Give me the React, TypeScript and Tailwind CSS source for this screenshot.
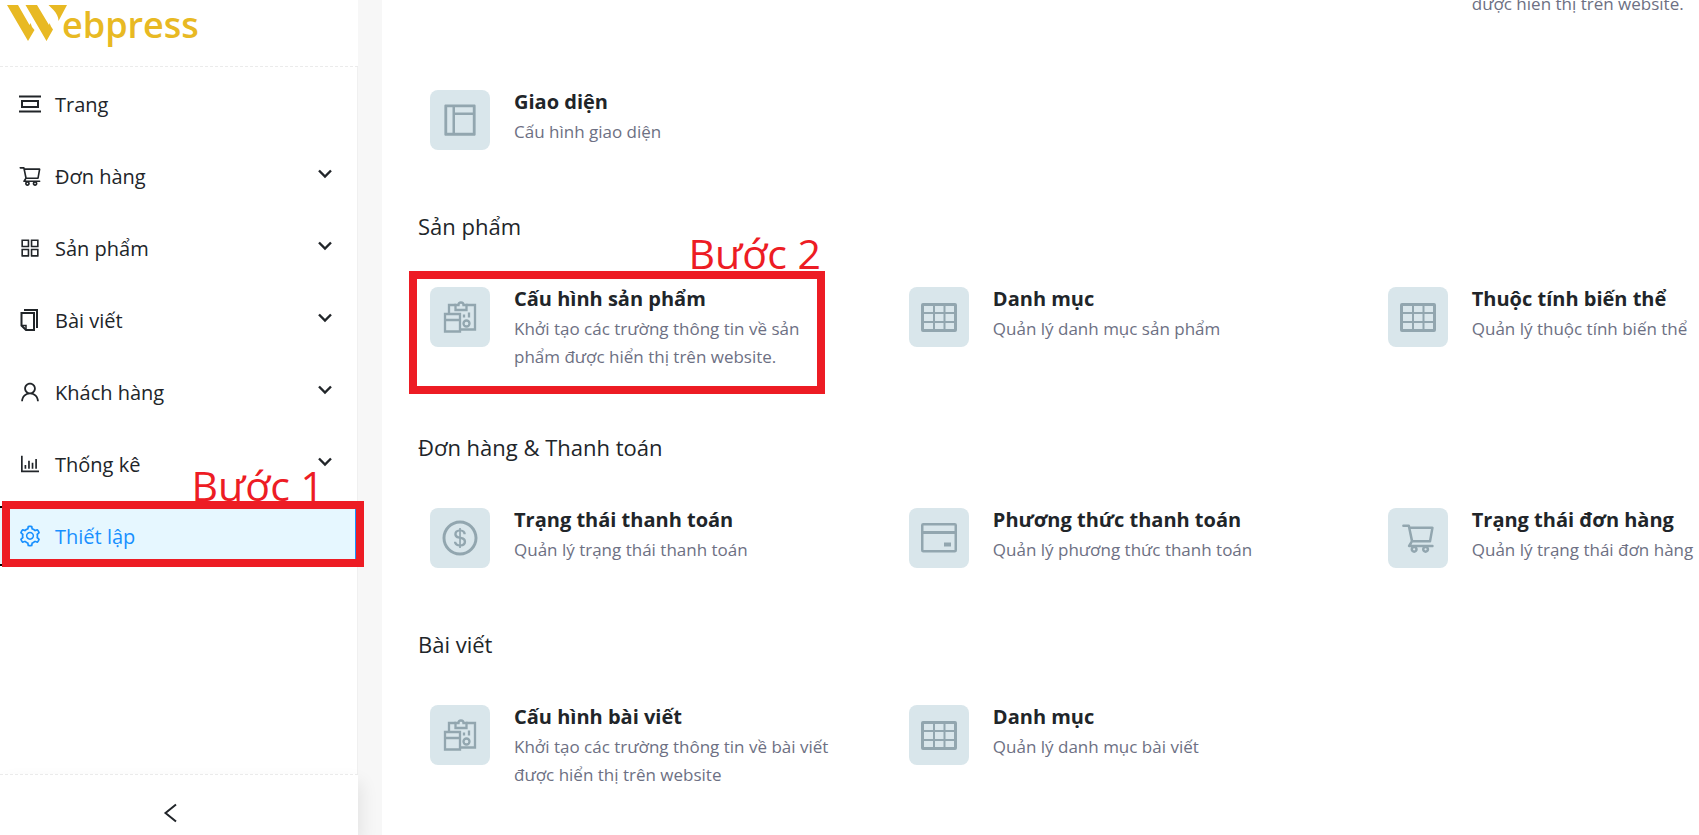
import type { ReactNode } from "react";
import {
  AiOutlineAppstore,
  AiOutlineBarChart,
  AiOutlineDollarCircle,
  AiOutlineLayout,
  AiOutlineSetting,
  AiOutlineShoppingCart,
  AiOutlineUser,
} from "react-icons/ai";

interface NavItem {
  label: string;
  icon: ReactNode;
  expandable?: boolean;
}

interface Setting {
  title: string;
  text: string;
  icon: ReactNode;
  step?: string;
}

interface Section {
  title: string;
  settings: Setting[];
}

function PageIcon() {
  return (
    <svg width="24" height="24" viewBox="0 0 24 24" fill="none" stroke="currentColor" strokeWidth="2">
      <path d="M1 4.5h22M1 19.5h22M4 9h16v6H4z" />
    </svg>
  );
}

function PostIcon() {
  return (
    <svg width="24" height="24" viewBox="0 0 24 24" fill="none" stroke="currentColor" strokeWidth="2">
      <path d="M6 2h13v18" />
      <path d="M3.500 5H16v17H8l-4.500-4.500z" />
      <path d="M3.500 17.500H8V22" strokeWidth="1.500" />
    </svg>
  );
}

function ChevronIcon() {
  return (
    <svg width="14" height="10" viewBox="0 0 14 10" fill="none" stroke="currentColor" strokeWidth="2.400" className="mb-1">
      <path d="M1 1.500l6 6 6-6" />
    </svg>
  );
}

function CollapseIcon() {
  return (
    <svg width="20" height="20" viewBox="0 0 20 20" fill="none" stroke="currentColor" strokeWidth="2">
      <path d="M16 1.500L5.500 10 16 18.500" />
    </svg>
  );
}

function TableIcon() {
  return (
    <svg width="36" height="36" viewBox="0 0 36 36" fill="none" stroke="currentColor" strokeWidth="2">
      <rect x="1.500" y="5.500" width="33" height="26" rx="0.500" strokeWidth="3" />
      <path d="M2 14h32M2 23h32M13 5v26M23.500 5v26" />
    </svg>
  );
}

function ConfigIcon() {
  return (
    <svg width="36" height="36" viewBox="0 0 36 36" fill="none" stroke="currentColor" strokeWidth="2.300">
      <path d="M7 14V6h7M24 6h9v24.500H18" />
      <path d="M13.500 6h3a2.500 2.500 0 0 1 5 0h3v5h-11z" />
      <path d="M3 15h15v17.500H3zM3 21h15" />
      <circle cx="24.500" cy="24.500" r="3" />
      <path d="M22 15.500v3M27 13.500v5" />
    </svg>
  );
}

function CardIcon() {
  return (
    <svg width="36" height="36" viewBox="0 0 36 36" fill="none" stroke="currentColor" strokeWidth="2.500">
      <rect x="1.250" y="4.250" width="33.500" height="27" rx="1" />
      <path d="M1 12.500h34" strokeWidth="3" />
      <path d="M23 24.500h7" strokeWidth="4" />
    </svg>
  );
}

const NAV: NavItem[] = [
  { label: "Trang", icon: <PageIcon /> },
  { label: "Đơn hàng", icon: <AiOutlineShoppingCart size={24} />, expandable: true },
  { label: "Sản phẩm", icon: <AiOutlineAppstore size={24} />, expandable: true },
  { label: "Bài viết", icon: <PostIcon />, expandable: true },
  { label: "Khách hàng", icon: <AiOutlineUser size={24} />, expandable: true },
  { label: "Thống kê", icon: <AiOutlineBarChart size={24} />, expandable: true },
];

const SECTIONS: Section[] = [
  {
    title: "Sản phẩm",
    settings: [
      {
        title: "Cấu hình sản phẩm",
        text: "Khởi tạo các trường thông tin về sản\nphẩm được hiển thị trên website.",
        icon: <ConfigIcon />,
        step: "Bước 2",
      },
      { title: "Danh mục", text: "Quản lý danh mục sản phẩm", icon: <TableIcon /> },
      { title: "Thuộc tính biến thể", text: "Quản lý thuộc tính biến thể", icon: <TableIcon /> },
    ],
  },
  {
    title: "Đơn hàng & Thanh toán",
    settings: [
      { title: "Trạng thái thanh toán", text: "Quản lý trạng thái thanh toán", icon: <AiOutlineDollarCircle size={40} /> },
      { title: "Phương thức thanh toán", text: "Quản lý phương thức thanh toán", icon: <CardIcon /> },
      { title: "Trạng thái đơn hàng", text: "Quản lý trạng thái đơn hàng", icon: <AiOutlineShoppingCart size={36} /> },
    ],
  },
  {
    title: "Bài viết",
    settings: [
      {
        title: "Cấu hình bài viết",
        text: "Khởi tạo các trường thông tin về bài viết\nđược hiển thị trên website",
        icon: <ConfigIcon />,
      },
      { title: "Danh mục", text: "Quản lý danh mục bài viết", icon: <TableIcon /> },
    ],
  },
];

function Logo() {
  return (
    <a href="#" className="flex h-[50px] items-start pl-[7px] text-[#e8b923]">
      <svg width="61" height="42" viewBox="0 0 61 42" fill="currentColor" className="-mr-[6px]" aria-hidden="true">
        <path d="M0 5h11l11.500 20 1-2 1.500 4 2.500 3-6.500 11z" />
        <path d="M18.500 5H30l12 20 .5-2 1.500 3.500 2 3L39.500 41z" />
        <path d="M41.500 5H60l-8.500 16c0-4-2-8-5-11z" />
      </svg>
      <span className="text-[36px] leading-[50px] font-semibold">ebpress</span>
    </a>
  );
}

function SettingCard({ title, text, icon, step }: Setting) {
  return (
    <div className="relative">
      <a href="#" className="flex items-start gap-6">
        <span className="flex size-15 shrink-0 items-center justify-center rounded-lg bg-[#d9e6eb] text-[#92a6af]">
          {icon}
        </span>
        <span className="whitespace-pre">
          <span className="mb-1 block text-[20px] leading-6 font-bold text-[#212529]">{title}</span>
          <span className="block text-[17px] leading-7 text-[#6d7083]">{text}</span>
        </span>
      </a>
      {step && (
        <div className="pointer-events-none absolute -top-4 -left-[21px] h-[123px] w-[416px] border-8 border-[#ed1c24]">
          <span className="absolute -right-1 bottom-full text-[41px] leading-[52px] whitespace-nowrap text-[#ed1c24]">
            {step}
          </span>
        </div>
      )}
    </div>
  );
}

function Sidebar() {
  return (
    <aside className="flex w-[358px] shrink-0 flex-col bg-white">
      <div className="h-[67px] border-b border-dashed border-[#ebebeb]">
        <Logo />
      </div>
      <nav className="flex flex-1 flex-col gap-3 border-r border-[#f0f0f0] pt-[7px] text-[20px] text-[#212529]">
        {NAV.map((item) => (
          <button key={item.label} className="flex h-15 items-center gap-[13px] pr-[25px] pl-[18px] text-left">
            {item.icon}
            <span className="flex-1 pt-0.5">{item.label}</span>
            {item.expandable && <ChevronIcon />}
          </button>
        ))}
        <div className="relative">
          <button className="flex h-15 w-full items-center gap-[13px] border-y-2 border-r-2 border-y-black border-r-[#1890ff] bg-[#e6f7ff] pl-[18px] text-left text-[#1890ff]">
            <AiOutlineSetting size={24} />
            <span className="pt-0.5">Thiết lập</span>
          </button>
          <div className="pointer-events-none absolute -top-[5px] -right-[7px] left-0.5 h-[66px] border-8 border-[#ed1c24]">
            <span className="absolute right-8 bottom-full text-[41px] leading-[48px] whitespace-nowrap text-[#ed1c24]">
              Bước 1
            </span>
          </div>
        </div>
      </nav>
      <button
        aria-label="Thu gọn"
        className="flex h-[61px] items-center border-t border-dashed border-[#ebebeb] pt-4 pl-40 text-[#212529] shadow-[4px_8px_16px_rgba(0,0,0,0.08)]"
      >
        <CollapseIcon />
      </button>
    </aside>
  );
}

export default function App() {
  return (
    <div className="flex h-screen overflow-hidden bg-[#f7f7f7] font-['Open_Sans','Noto_Sans',sans-serif]">
      <Sidebar />
      <main className="ml-6 min-w-0 flex-1 overflow-hidden bg-white pl-9">
        <div className="grid h-[18px] grid-cols-[20fr_20fr_13fr] content-end pl-3">
          <p className="col-start-3 pl-[84px] text-[17px] leading-7 whitespace-pre text-[#6d7083]">
            được hiển thị trên website.
          </p>
        </div>
        <div className="mt-18 pl-3">
          <SettingCard title="Giao diện" text="Cấu hình giao diện" icon={<AiOutlineLayout size={40} />} />
        </div>
        {SECTIONS.map((section) => (
          <section key={section.title} className="pt-15">
            <h2 className="text-[22px] leading-8 font-medium text-[#212529]">{section.title}</h2>
            <div className="mt-[45px] grid grid-cols-[20fr_20fr_13fr] pl-3">
              {section.settings.map((setting) => (
                <SettingCard key={setting.title} {...setting} />
              ))}
            </div>
          </section>
        ))}
      </main>
    </div>
  );
}
